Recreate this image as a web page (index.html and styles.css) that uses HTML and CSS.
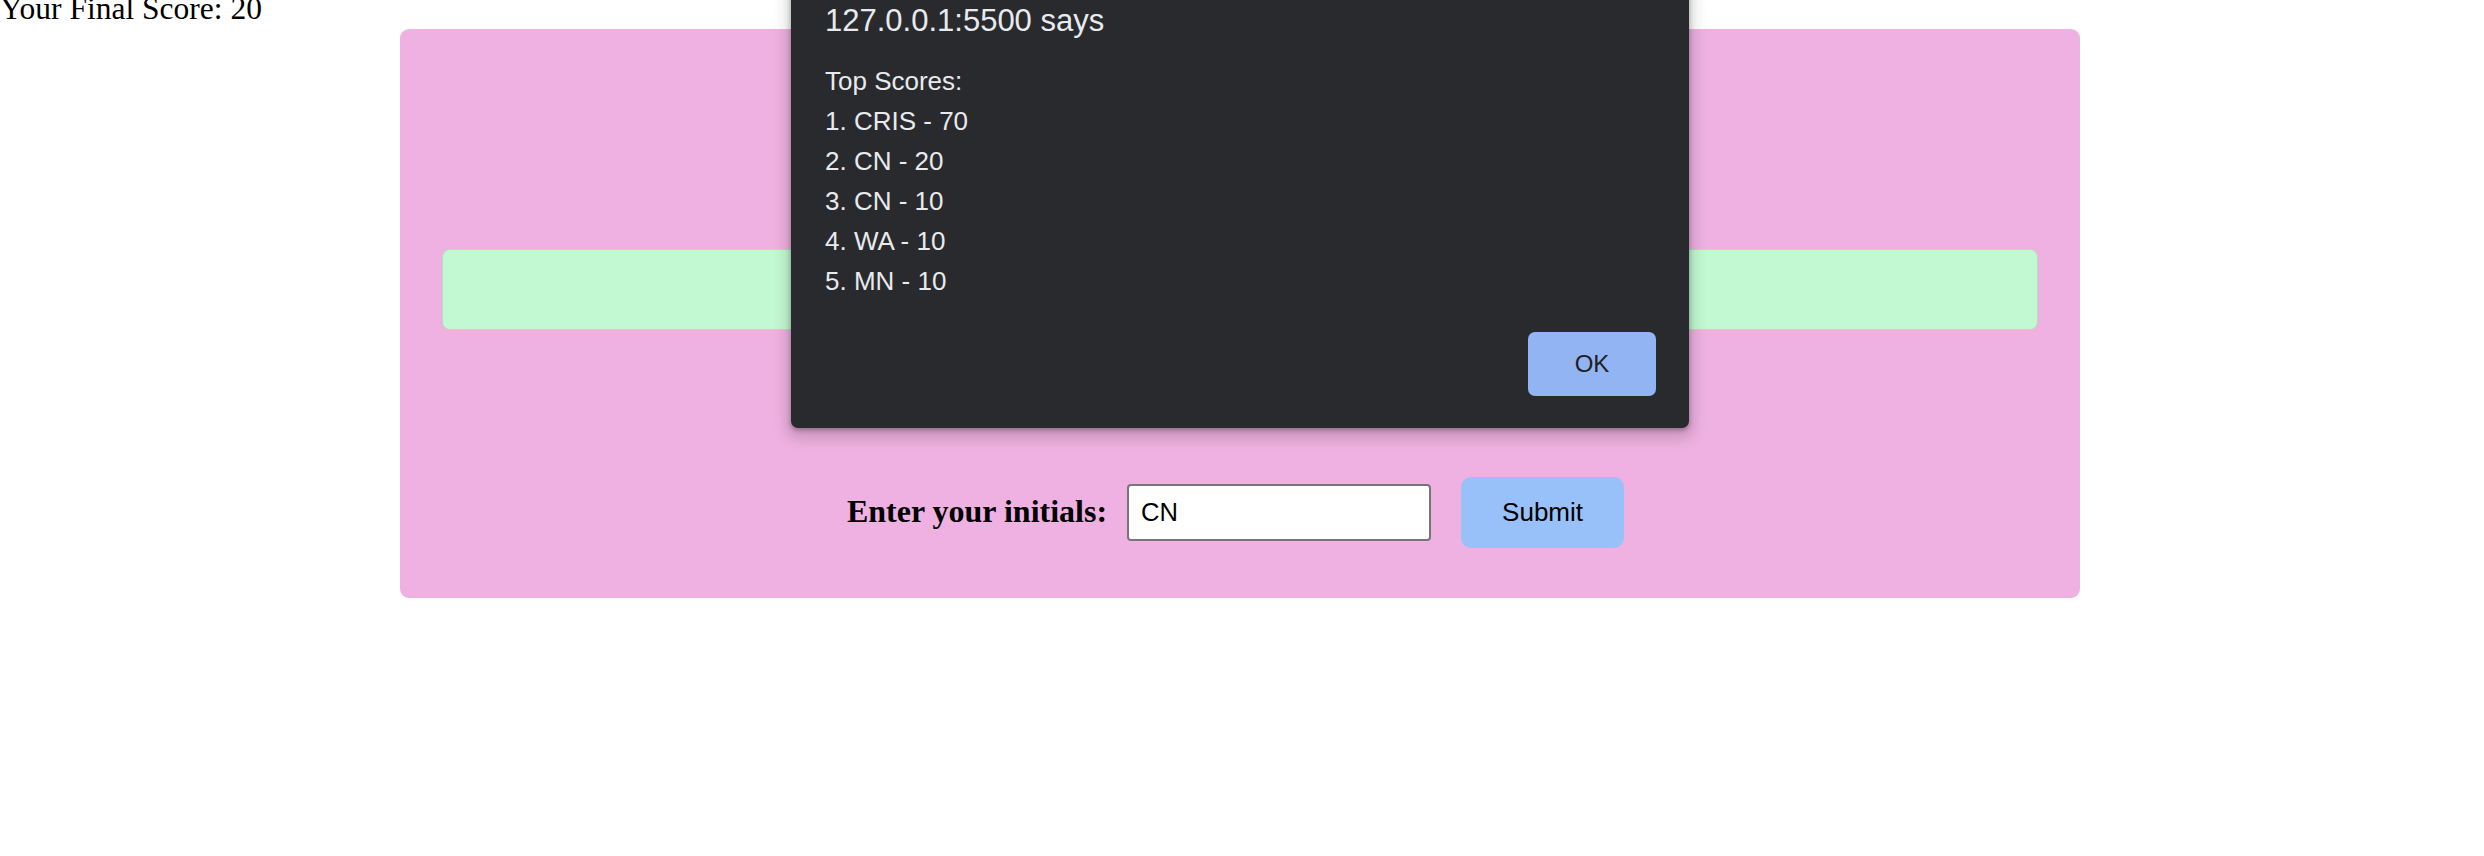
FILE: index.html
```html
<!DOCTYPE html>
<html lang="en">
<head>
<meta charset="utf-8">
<title>Quiz</title>
<link rel="stylesheet" href="styles.css">
</head>
<body>
  <div class="final-score">Your Final Score: 20</div>
  <div class="card">
    <div class="feedback"></div>
    <form class="initials-row">
      <label class="initials-label" for="initials">Enter your initials:</label>
      <input class="initials-input" id="initials" type="text" value="CN">
      <button class="submit-btn" type="button">Submit</button>
    </form>
  </div>

  <div class="alert">
    <div class="alert-title">127.0.0.1:5500 says</div>
    <div class="alert-body">Top Scores:
1. CRIS - 70
2. CN - 20
3. CN - 10
4. WA - 10
5. MN - 10</div>
    <div class="alert-actions">
      <button class="alert-ok" type="button">OK</button>
    </div>
  </div>
</body>
</html>
```

FILE: styles.css
```css
html, body {
  margin: 0;
  padding: 0;
  background: #ffffff;
}

body {
  position: relative;
  width: 2484px;
  height: 856px;
  overflow: hidden;
  font-family: "Liberation Serif", "Times New Roman", serif;
  color: #000;
}

.final-score {
  font-size: 31.5px;
  line-height: 36px;
  margin-top: -9px;
  white-space: nowrap;
}

.card {
  box-sizing: border-box;
  width: 1680px;
  height: 569px;
  margin: 2px 0 0 400px;
  padding: 220px 42px 0;
  background: #efb1e1;
  border-radius: 9px;
  display: flex;
  flex-direction: column;
}

.feedback {
  box-sizing: border-box;
  height: 81px;
  background: #c3f9d2;
  border: 1px solid #b3dfc0;
  border-radius: 8px;
}

.initials-row {
  display: flex;
  align-items: center;
  justify-content: center;
  margin: 147px 0 0;
  padding-right: 9px;
  height: 71px;
}

.initials-label {
  font-family: "Liberation Serif", "Times New Roman", serif;
  font-weight: bold;
  font-size: 32px;
  line-height: 36px;
  margin-right: 20px;
  margin-bottom: 3px;
  white-space: nowrap;
}

.initials-input {
  box-sizing: border-box;
  width: 304px;
  height: 57px;
  margin: 0 30px 0 0;
  padding: 0 12px;
  border: 2px solid #767676;
  border-radius: 4px;
  background: #fff;
  font-family: "Liberation Sans", Arial, sans-serif;
  font-size: 25.6px;
  color: #000;
  outline: none;
}

.submit-btn {
  box-sizing: border-box;
  width: 163px;
  height: 71px;
  border: none;
  border-radius: 10px;
  background: #97c1f8;
  font-family: "Liberation Sans", Arial, sans-serif;
  font-size: 26px;
  color: #000;
  padding: 0;
}

/* browser alert dialog overlay */
.alert {
  position: absolute;
  top: -20px;
  left: 791px;
  box-sizing: border-box;
  width: 898px;
  height: 448px;
  padding: 23px 33px 32px 34px;
  background: #292a2d;
  border-radius: 7px;
  box-shadow: 0 2px 5px rgba(0, 0, 0, 0.3), 0 6px 14px 5px rgba(0, 0, 0, 0.15);
  font-family: "Liberation Sans", Arial, sans-serif;
  color: #e8eaed;
  display: flex;
  flex-direction: column;
}

.alert-title {
  font-size: 31px;
  line-height: 36px;
  white-space: nowrap;
}

.alert-body {
  margin-top: 22px;
  font-size: 26px;
  line-height: 40px;
  white-space: pre-line;
}

.alert-actions {
  margin-top: auto;
  display: flex;
  justify-content: flex-end;
}

.alert-ok {
  width: 128px;
  height: 64px;
  border: none;
  border-radius: 7px;
  background: #93b4f2;
  color: #202124;
  font-family: "Liberation Sans", Arial, sans-serif;
  font-size: 24px;
  padding: 0;
}
```
